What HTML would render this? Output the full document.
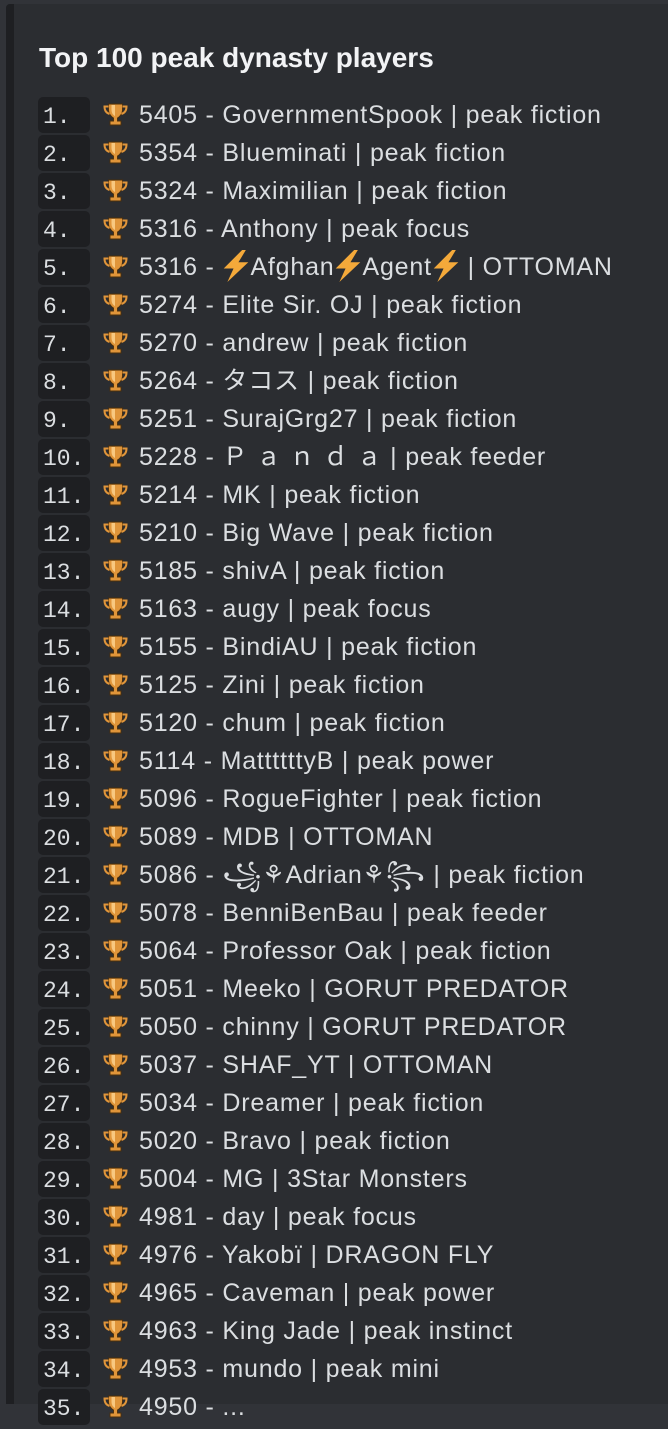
<!DOCTYPE html>
<html><head><meta charset="utf-8"><style>
html,body{margin:0;padding:0;width:668px;height:1394px;background:#313338;overflow:hidden}
.embed{position:absolute;left:6px;top:4px;width:662px;height:1400px;background:#2b2d31;border-radius:4px 0 0 0}
.bar{position:absolute;left:6px;top:4px;width:8px;height:1400px;background:#1e1f22;border-radius:4px 0 0 0}
.title{position:absolute;left:39px;top:42px;font:bold 28px "Liberation Sans",sans-serif;color:#f2f3f5;line-height:32px}
.row{position:absolute;left:0;height:38px;width:668px}
.num{position:absolute;left:38px;top:1px;width:52px;height:36px;background:#1e1f22;border-radius:5px;font:23px "Liberation Mono",monospace;line-height:40px;color:#dbdee1;padding-left:5px;box-sizing:border-box}
.tr{position:absolute;left:103px;top:6px;width:25px;height:26px}
.txt{position:absolute;left:139px;top:0;font:25px "Liberation Sans","Noto Sans CJK JP","DejaVu Sans",sans-serif;line-height:38px;letter-spacing:0.8px;color:#dbdee1;white-space:nowrap}
.z{display:inline-block;width:28px;height:32px;vertical-align:-7px}
</style></head><body>
<div class="embed"></div><div class="bar"></div>
<div class="title">Top 100 peak dynasty players</div>
<div id="rows"></div>
<script>
var T="<svg class='tr' viewBox='0 0 25 25'><path d='M5.5 1.5h14v5.5c0 4.5-3 7.5-5 8.5v3h3.5v4h-11v-4H10.5v-3c-2-1-5-4-5-8.5z' fill='#e0953a' stroke='#4a2e0c' stroke-width='0.9'/><path d='M5.5 4H1.5c0 4.5 2 6.5 5 7.5M19.5 4h4c0 4.5-2 6.5-5 7.5' fill='none' stroke='#e0953a' stroke-width='2'/><path d='M8.5 2.5h3.5v11c-2-1-3.5-3-3.5-6.5z' fill='#f8c880'/></svg>";
var B="<svg class='z' viewBox='0 0 22 26'><path d='M16 0L1 15h8l-5 11 17-16h-8l6-10z' fill='#f4a93a'/></svg>";
var d=[
"5405 - GovernmentSpook | peak fiction","5354 - Blueminati | peak fiction","5324 - Maximilian | peak fiction","5316 - Anthony | peak focus",
"5316 - "+B+"Afghan"+B+"Agent"+B+" | OTTOMAN",
"5274 - Elite Sir. OJ | peak fiction","5270 - andrew | peak fiction","5264 - タコス | peak fiction","5251 - SurajGrg27 | peak fiction",
"5228 - Ｐ ａ ｎ ｄ ａ | peak feeder","5214 - MK | peak fiction","5210 - Big Wave | peak fiction","5185 - shivA | peak fiction",
"5163 - augy | peak focus","5155 - BindiAU | peak fiction","5125 - Zini | peak fiction","5120 - chum | peak fiction",
"5114 - MattttttyB | peak power","5096 - RogueFighter | peak fiction","5089 - MDB | OTTOMAN",
"5086 - ꧁⚘Adrian⚘꧂ | peak fiction","5078 - BenniBenBau | peak feeder","5064 - Professor Oak | peak fiction",
"5051 - Meeko | GORUT PREDATOR","5050 - chinny | GORUT PREDATOR","5037 - SHAF_YT | OTTOMAN","5034 - Dreamer | peak fiction",
"5020 - Bravo | peak fiction","5004 - MG | 3Star Monsters","4981 - day | peak focus","4976 - Yakobï | DRAGON FLY",
"4965 - Caveman | peak power","4963 - King Jade | peak instinct","4953 - mundo | peak mini","4950 - ..."];
var h="";
for(var i=0;i<d.length;i++){h+="<div class='row' style='top:"+(96+i*38)+"px'><div class='num'>"+(i+1)+".</div>"+T+"<div class='txt'>"+d[i]+"</div></div>";}
document.getElementById("rows").innerHTML=h;
</script>
</body></html>
